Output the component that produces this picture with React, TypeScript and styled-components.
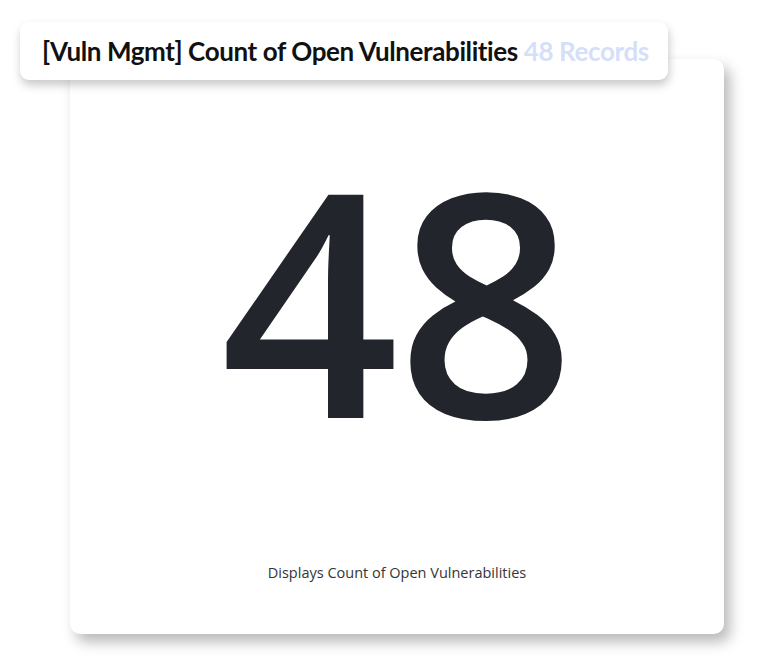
import styled, { createGlobalStyle } from 'styled-components'

const GlobalStyle = createGlobalStyle`
  html, body {
    margin: 0;
    padding: 0;
    background: #ffffff;
  }
`

const Stage = styled.div`
  position: relative;
  width: 768px;
  height: 669px;
  padding: 59px 0 0 70px;
  box-sizing: border-box;
`

const Card = styled.div`
  width: 654px;
  height: 575px;
  background: #ffffff;
  border-radius: 10px;
  box-shadow: 6px 8px 14px rgba(0, 0, 0, 0.28);
  display: flex;
  flex-direction: column;
  align-items: center;
  box-sizing: border-box;
`

const TitlePill = styled.div`
  position: absolute;
  top: 22px;
  left: 20px;
  width: 648px;
  height: 58px;
  box-sizing: border-box;
  padding: 0 0 0 22px;
  background: #ffffff;
  border-radius: 9px;
  box-shadow: 1px 5px 10px rgba(0, 0, 0, 0.22);
  display: flex;
  align-items: center;
  font-family: Lato, 'Liberation Sans', sans-serif;
  font-weight: 700;
  font-size: 26px;
  color: #111111;
  letter-spacing: -0.4px;
  white-space: nowrap;
`

const Records = styled.span`
  color: #d5dffa;
  margin-left: 6px;
`

const BigNumber = styled.div`
  margin-top: 82px;
  font-family: 'Open Sans', 'Noto Sans', sans-serif;
  font-weight: 600;
  font-size: 312px;
  line-height: 312px;
  color: #22252b;
  letter-spacing: -2px;
`

const Caption = styled.div`
  margin-top: auto;
  margin-bottom: 52px;
  font-family: 'Open Sans', 'Noto Sans', sans-serif;
  font-size: 14.5px;
  color: #333538;
`

export default function App() {
  return (
    <>
      <GlobalStyle />
      <Stage>
        <Card>
          <BigNumber>48</BigNumber>
          <Caption>Displays Count of Open Vulnerabilities</Caption>
        </Card>
        <TitlePill>
          [Vuln Mgmt] Count of Open Vulnerabilities
          <Records>48 Records</Records>
        </TitlePill>
      </Stage>
    </>
  )
}
